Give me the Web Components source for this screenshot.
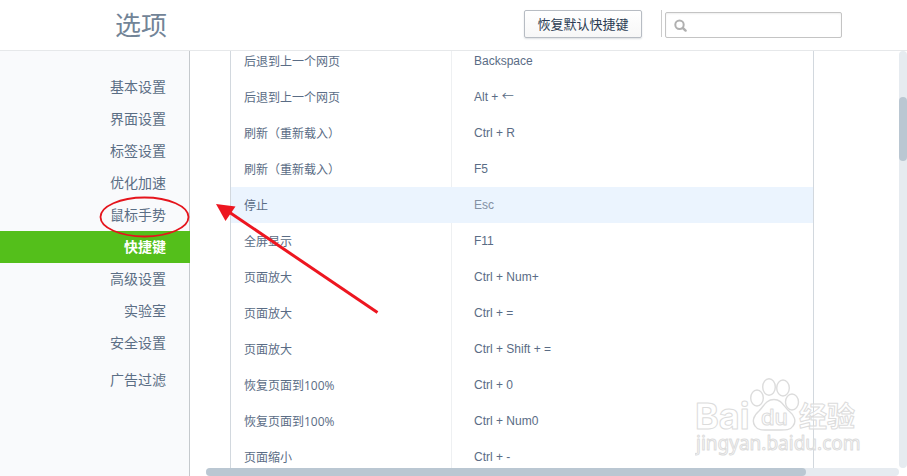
<!DOCTYPE html>
<html lang="zh-CN">
<head>
<meta charset="utf-8">
<title>选项</title>
<style>
html, body { margin: 0; height: 100%; }
body {
  font-family: "Open Sans", "Noto Sans CJK SC", sans-serif;
  color: #5a6c85;
  background: #fff;
  overflow: hidden;
}
</style>
</head>
<body>
<options-page></options-page>

<template id="page-tpl">
  <style>
    :host { display: grid; grid-template-rows: auto 1fr; height: 100vh; position: relative; }
    .body { display: grid; grid-template-columns: 190px 1fr; min-height: 0; }
  </style>
  <options-header><span slot="title">选项</span><span slot="action">恢复默认快捷键</span></options-header>
  <div class="body">
    <side-nav></side-nav>
    <scroll-pane><shortcut-table></shortcut-table></scroll-pane>
  </div>
  <site-mark></site-mark>
  <red-notes></red-notes>
</template>

<template id="header-tpl">
  <style>
    :host { display: flex; align-items: center; height: 50px; padding-right: 65px; border-bottom: 1px solid #e6e8ea; background: #fff; }
    h1 { margin: 0; width: 167px; text-align: right; font-size: 26px; line-height: 52px; font-weight: 400; color: #728497; }
    .tools { margin-left: auto; display: flex; align-items: center; gap: 3px; }
    button {
      box-sizing: border-box; width: 118px; height: 28px; padding: 0; margin: 0 16px 2px 0;
      font: 13px/26px "Noto Sans CJK SC", sans-serif; white-space: nowrap; color: #2b3c53;
      border: 1px solid #b7bcc3; border-radius: 2px;
      background: linear-gradient(#fff, #f7f7f7); box-shadow: 0 1px 2px #dcdfe2;
    }
    .rule { width: 1px; height: 27px; background: #ccc; margin-bottom: 3px; }
    label { display: flex; align-items: center; box-sizing: border-box; width: 177px; height: 26px; padding-left: 8px; gap: 4px;
      border: 1px solid #c4c4c4; border-radius: 2px; background: #fff; box-shadow: inset 0 1px 2px #eee; }
    label svg { flex: none; width: 13px; height: 13px; }
    input { flex: 1; min-width: 0; border: 0; outline: 0; padding: 0; background: none; font: 12px "Liberation Sans", sans-serif; }
  </style>
  <h1><slot name="title"></slot></h1>
  <div class="tools">
    <button type="button"><slot name="action"></slot></button>
    <span class="rule"></span>
    <label><svg viewBox="0 0 13 13" aria-hidden="true"><circle cx="5.5" cy="5.7" r="4.2" fill="none" stroke="#b0b0b0" stroke-width="2"/><path d="M8.8 9L11.6 11.6" stroke="#b0b0b0" stroke-width="2.4" stroke-linecap="round"/></svg><input type="search" aria-label="搜索"></label>
  </div>
</template>

<template id="nav-tpl">
  <style>
    :host { display: block; box-sizing: border-box; padding-top: 20px; background: #f9fafc; border-right: 1px solid #c5c9cd; }
    nav { display: flex; flex-direction: column; margin-right: -1px; }
    a { padding-right: 24px; text-align: right; font-size: 14px; line-height: 32px; color: #5b6e85; text-decoration: none; }
    a[aria-current] { background: #54bf1b; color: #fff; font-weight: 700; }
    a:last-child { margin-top: 5px; }
  </style>
  <nav></nav>
</template>

<template id="scroll-tpl">
  <style>
    :host { display: grid; grid-template: minmax(0, 1fr) 8px / minmax(0, 1fr) 8px; min-height: 0; }
    .view { overflow: hidden; padding: 0 85px 0 40px; }
    .v, .h { display: grid; background: #e6ebf0; border-radius: 4px; }
    .v { grid-template-rows: 46fr 64fr 307fr; }
    .h { margin-left: 16px; grid-template-columns: 600fr 93fr; }
    i { background: #bac7d2; border-radius: 4px; }
    .v i { grid-row: 2; }
  </style>
  <div class="view"><slot></slot></div>
  <div class="v"><i></i></div>
  <div class="h"><i></i></div>
</template>

<template id="table-tpl">
  <style>
    :host { display: block; margin-top: -8px; }
    table { box-sizing: border-box; width: 100%; table-layout: fixed; border-collapse: separate; border-spacing: 0; border: solid #d2d8de; border-width: 0 1px; }
    col:first-child { width: 221px; }
    td { height: 36px; box-sizing: border-box; font-size: 12px; line-height: 20px; padding: 2px 0 0 13px; }
    td:first-child { border-right: 1px solid #eef0f2; }
    td + td { padding: 0 0 0 22px; font-family: "Liberation Sans", sans-serif; }
    .arrow { font-family: "Noto Sans CJK SC", sans-serif; line-height: 1; }
    tr.on td { background: #ebf4fe; border-color: #ebf4fe; }
    tr.on td + td { color: #8391a3; }
  </style>
  <table aria-label="快捷键"><colgroup><col><col></colgroup><tbody></tbody></table>
</template>

<template id="mark-tpl">
  <style>
    :host { position: absolute; right: 44px; bottom: 16px; width: 168px; height: 84px; pointer-events: none; }
    svg { display: block; }
    .o { fill: #fff; fill-opacity: .6; stroke: #dcdcdc; stroke-width: 1; stroke-linejoin: round; }
    text { font-family: Inter, "Noto Sans CJK SC", sans-serif; }
    .url { font-family: "Noto Sans", sans-serif; }
  </style>
  <svg width="168" height="84" viewBox="0 0 168 84" aria-hidden="true">
    <g class="o">
      <text x="0" y="53" font-size="36" font-weight="700">Bai</text>
      <g stroke-width="1.4">
        <ellipse cx="62" cy="22" rx="6.3" ry="8"/>
        <ellipse cx="74" cy="11" rx="6.3" ry="8.3"/>
        <ellipse cx="88" cy="12" rx="6.3" ry="8"/>
        <ellipse cx="97" cy="26" rx="6.5" ry="8"/>
        <path d="M79 23.500C71 23.500 69 30 64 35C58 40 57 46 60 50C63 55 69 54 79 54C89 54 95 55 98 50C102 45 99 39 94 35C89 31 87 23.500 79 23.500Z"/>
      </g>
      <text x="66" y="49" font-size="22" font-weight="500">du</text>
      <text x="104" y="51" font-size="28" font-weight="700">经验</text>
      <text class="url" x="1" y="74" font-size="19">jingyan.baidu.com</text>
    </g>
  </svg>
</template>

<template id="notes-tpl">
  <style>
    :host { position: absolute; left: 96px; top: 192px; pointer-events: none; }
    svg { display: block; }
  </style>
  <svg width="290" height="126" viewBox="96 192 290 126" aria-hidden="true">
    <ellipse cx="144.5" cy="217" rx="44" ry="19.5" fill="none" stroke="#e5141c" stroke-width="1.8"/>
    <path d="M229 212L377.500 312.500" stroke="#ed1620" stroke-width="3"/>
    <path d="M216 204L235.500 206.500L225.500 221Z" fill="#ed1620"/>
  </svg>
</template>

<script>
class TemplateElement extends HTMLElement {
  constructor() {
    super();
    this.attachShadow({ mode: "open" })
      .append(document.getElementById(this.constructor.template).content.cloneNode(true));
  }
}

class OptionsHeader extends TemplateElement { static template = "header-tpl"; }
class ScrollPane extends TemplateElement { static template = "scroll-tpl"; }
class SiteMark extends TemplateElement { static template = "mark-tpl"; }
class RedNotes extends TemplateElement { static template = "notes-tpl"; }
class OptionsPage extends TemplateElement { static template = "page-tpl"; }

class SideNav extends TemplateElement {
  static template = "nav-tpl";
  constructor() {
    super();
    const nav = this.shadowRoot.querySelector("nav");
    for (const name of ["基本设置", "界面设置", "标签设置", "优化加速", "鼠标手势", "快捷键", "高级设置", "实验室", "安全设置", "广告过滤"]) {
      const a = document.createElement("a");
      a.href = "#" + name;
      a.textContent = name;
      if (name === "快捷键") a.setAttribute("aria-current", "page");
      nav.append(a);
    }
  }
}

class ShortcutTable extends TemplateElement {
  static template = "table-tpl";
  constructor() {
    super();
    const body = this.shadowRoot.querySelector("tbody");
    const rows = [
      ["后退到上一个网页", "Backspace"],
      ["后退到上一个网页", 'Alt + <span class="arrow">←</span>'],
      ["刷新（重新载入）", "Ctrl + R"],
      ["刷新（重新载入）", "F5"],
      ["停止", "Esc"],
      ["全屏显示", "F11"],
      ["页面放大", "Ctrl + Num+"],
      ["页面放大", "Ctrl + ="],
      ["页面放大", "Ctrl + Shift + ="],
      ["恢复页面到100%", "Ctrl + 0"],
      ["恢复页面到100%", "Ctrl + Num0"],
      ["页面缩小", "Ctrl + -"]
    ];
    for (const [action, keys] of rows) {
      const tr = body.insertRow();
      tr.insertCell().textContent = action;
      tr.insertCell().innerHTML = keys;
      if (action === "停止") tr.className = "on";
    }
  }
}

customElements.define("options-header", OptionsHeader);
customElements.define("side-nav", SideNav);
customElements.define("scroll-pane", ScrollPane);
customElements.define("shortcut-table", ShortcutTable);
customElements.define("site-mark", SiteMark);
customElements.define("red-notes", RedNotes);
customElements.define("options-page", OptionsPage);
</script>
</body>
</html>
